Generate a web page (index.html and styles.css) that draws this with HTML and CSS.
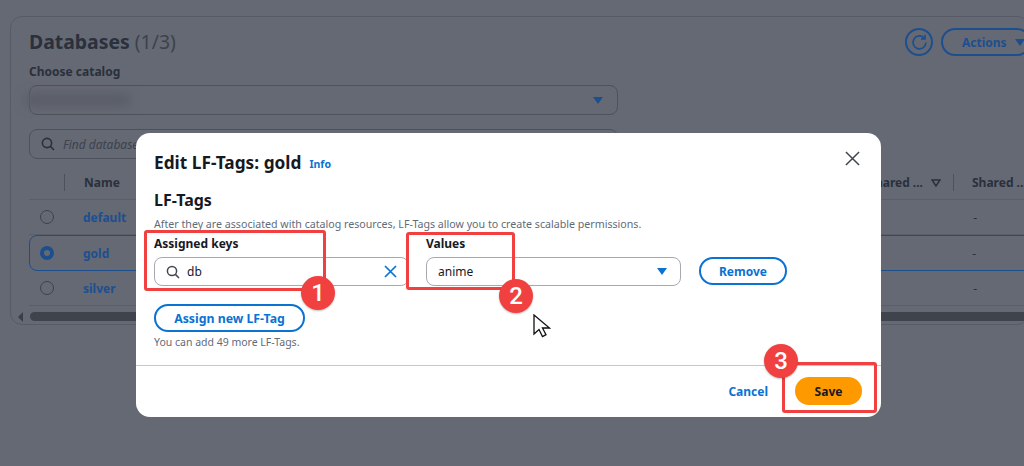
FILE: index.html
```html
<!DOCTYPE html>
<html lang="en">
<head>
    <meta charset="UTF-8">
    <title>Edit LF-Tags</title>
    <link rel="stylesheet" href="styles.css">
</head>
<body>
    <div class="card">
        <div class="card-top">
            <h1>Databases <span class="count">(1/3)</span></h1>
            <div class="top-actions">
                <span class="refresh">
                    <svg width="17" height="17" viewBox="0 0 20 20" fill="none" stroke="#1d4f8f" stroke-width="2"><path d="M15.500 4.600A7.600 7.600 0 1 0 17.600 10"/><path d="M16.500 1v4.700h-4.700"/></svg>
                </span>
                <span class="actions-btn">Actions <i class="caret caret-dim"></i></span>
            </div>
        </div>
        <div class="catalog-label">Choose catalog</div>
        <div class="select-box"><span class="blurred"></span><i class="caret caret-dim"></i></div>
        <div class="find-box">
            <svg width="14" height="14" viewBox="0 0 14 14" fill="none" stroke="#2a303c" stroke-width="1.6"><circle cx="6" cy="6" r="4.6"/><path d="M9.4 9.4L13 13"/></svg>
            <span>Find databases</span>
        </div>
        <div class="table-head">
            <span class="head-sep"></span>
            <span class="head-name">Name</span>
            <span class="head-shared">Shared ...</span>
            <svg class="sort" width="10" height="8" viewBox="0 0 10 8" fill="none" stroke="#2a303c" stroke-width="1.5"><path d="M1 1h8L5 7z"/></svg>
            <span class="head-sep"></span>
            <span class="head-last">Shared ...</span>
        </div>
        <div class="row"><i class="radio"></i><a>default</a><span class="dash">-</span></div>
        <div class="row row-selected"><i class="radio radio-on"></i><a>gold</a><span class="dash">-</span></div>
        <div class="row"><i class="radio"></i><a>silver</a><span class="dash">-</span></div>
        <div class="scroll">
            <i class="scroll-arrow"></i>
            <span class="scroll-thumb"></span>
        </div>
    </div>

    <div class="modal">
        <div class="modal-body">
            <div class="modal-title">
                <h2>Edit LF-Tags: gold</h2>
                <a class="info">Info</a>
                <svg class="close" width="15" height="15" viewBox="0 0 16 16" fill="none" stroke="#3f4650" stroke-width="1.6"><path d="M1 1l14 14M15 1L1 15"/></svg>
            </div>
            <h3>LF-Tags</h3>
            <p class="desc">After they are associated with catalog resources, LF-Tags allow you to create scalable permissions.</p>
            <div class="tag-row">
                <div class="field">
                    <label>Assigned keys</label>
                    <div class="input">
                        <svg width="14" height="14" viewBox="0 0 14 14" fill="none" stroke="#414750" stroke-width="1.5"><circle cx="6" cy="6" r="4.6"/><path d="M9.4 9.4L13 13"/></svg>
                        <span>db</span>
                        <svg class="clear" width="13" height="13" viewBox="0 0 13 13" fill="none" stroke="#0972d3" stroke-width="1.7"><path d="M1 1l11 11M12 1L1 12"/></svg>
                    </div>
                </div>
                <div class="field">
                    <label>Values</label>
                    <div class="input">
                        <span>anime</span>
                        <i class="caret"></i>
                    </div>
                </div>
                <button class="btn btn-remove">Remove</button>
            </div>
            <button class="btn btn-assign">Assign new LF-Tag</button>
            <p class="hint">You can add 49 more LF-Tags.</p>
        </div>
        <div class="modal-foot">
            <a class="cancel">Cancel</a>
            <button class="save">Save</button>
        </div>
    </div>

    <!-- red annotations drawn on top of the screenshot -->
    <div class="mark mark-1"></div>
    <div class="mark mark-2"></div>
    <div class="mark mark-3"></div>
    <div class="dot dot-1">1</div>
    <div class="dot dot-2">2</div>
    <div class="dot dot-3">3</div>
    <svg class="pointer" width="18" height="25" viewBox="0 0 18 25" fill="#fff" stroke="#111" stroke-width="1.3"><path d="M1 1v19l5-4.500 3.500 7 3.500-1.800-3.500-6.700h7z"/></svg>
</body>
</html>
```

FILE: styles.css
```css
* {
    box-sizing: border-box;
}
html, body {
    height: 466px;
    overflow: hidden;
}
body {
    margin: 0;
    padding: 16px 0 0 10px;
    background-color: #656973;
    font-family: "Noto Sans", "Open Sans", sans-serif;
    color: #2a303c;
}
.card {
    width: 1019px;
    height: 309px;
    padding: 1px 0 0 18px;
    border: 1px solid #575b65;
    border-radius: 12px;
}
.card-top {
    display: flex;
    justify-content: space-between;
    align-items: center;
    height: 48px;
}
h1 {
    flex: none;
    margin: 0;
    font-size: 19.400px;
    font-weight: 700;
    line-height: 48px;
    color: #2a303c;
}
.count {
    font-weight: 400;
    color: #3c424d;
}
.top-actions {
    display: flex;
    flex: none;
    align-items: center;
    gap: 8px;
    margin-right: -3px;
}
.refresh {
    display: flex;
    align-items: center;
    justify-content: center;
    width: 28px;
    height: 28px;
    border: 2px solid #1d4f8f;
    border-radius: 50%;
}
.actions-btn {
    display: flex;
    align-items: center;
    gap: 8px;
    width: 90px;
    height: 28px;
    padding-left: 19px;
    border: 2px solid #1d4f8f;
    border-radius: 14px;
    font-size: 12px;
    font-weight: 700;
    color: #1d4f8f;
}
.catalog-label {
    margin-top: -2px;
    font-size: 12px;
    font-weight: 700;
    line-height: 16px;
}
.select-box {
    display: flex;
    align-items: center;
    justify-content: space-between;
    width: 589px;
    height: 30px;
    margin-top: 5px;
    padding: 0 14px 0 0;
    border: 1px solid #4d515b;
    border-radius: 8px;
}
.blurred {
    width: 105px;
    height: 14px;
    margin-left: -5px;
    background-color: #5a5e68;
    border-radius: 4px;
    filter: blur(5px);
}
.caret {
    display: inline-block;
    width: 0;
    height: 0;
    border-left: 5px solid transparent;
    border-right: 5px solid transparent;
    border-top: 7px solid #0972d3;
}
.caret-dim {
    border-top-color: #1d4f8f;
}
.find-box {
    display: flex;
    align-items: center;
    gap: 8px;
    width: 589px;
    height: 30px;
    margin-top: 14px;
    padding-left: 11px;
    border: 1px solid #4d515b;
    border-radius: 8px;
    font-size: 12px;
    font-style: italic;
    color: #3c424d;
}
.table-head {
    display: flex;
    align-items: center;
    width: 1000px;
    height: 41px;
    padding: 7px 0 0 35px;
    border-bottom: 1px solid #5a5e68;
    font-size: 12px;
    font-weight: 700;
}
.head-sep {
    width: 1px;
    height: 17px;
    background-color: #4d515b;
}
.head-name {
    margin-left: 19px;
}
.head-shared {
    margin-left: auto;
}
.sort {
    margin-left: 8px;
    margin-right: 12px;
}
.head-last {
    flex: none;
    margin-left: 18px;
    width: 57px;
}
.row {
    display: flex;
    align-items: center;
    width: 1000px;
    height: 35px;
    padding-left: 11px;
    border-bottom: 1px solid #5a5e68;
    font-size: 12px;
}
.row a {
    margin-left: 29px;
    font-weight: 700;
    color: #1d4f8f;
}
.dash {
    margin-left: auto;
    margin-right: 52px;
    color: #2a303c;
}
.row-selected {
    height: 36px;
    padding-left: 10px;
    border: 1px solid #1d4f8f;
    border-radius: 8px 0 0 8px;
}
.radio {
    width: 14px;
    height: 14px;
    border: 1px solid #3c424d;
    border-radius: 50%;
}
.radio-on {
    border: 4px solid #1d4f8f;
    background-color: #656973;
}
.scroll {
    display: flex;
    align-items: center;
    margin-left: -17px;
    margin-top: 6px;
    height: 9px;
    width: 1017px;
}
.scroll-arrow {
    width: 0;
    height: 0;
    border-top: 5px solid transparent;
    border-bottom: 5px solid transparent;
    border-right: 5px solid #3a3e47;
    margin-left: 6px;
}
.scroll-thumb {
    flex: 1;
    height: 9px;
    margin-left: 7px;
    background-color: #3f434c;
    border-radius: 5px;
}

.modal {
    position: absolute;
    left: 136px;
    top: 133px;
    width: 745px;
    height: 284px;
    background-color: #fff;
    border-radius: 14px;
    color: #16191f;
}
.modal-body {
    height: 233px;
    padding: 16px 18px 0;
    border-bottom: 1px solid #c6c6cd;
}
.modal-title {
    display: flex;
    align-items: center;
    height: 26px;
}
h2 {
    margin: 0;
    font-size: 17.300px;
    font-weight: 700;
}
.info {
    margin-left: 8px;
    margin-top: 4px;
    font-size: 10.500px;
    font-weight: 700;
    color: #0972d3;
}
.close {
    margin-left: auto;
    margin-right: 3px;
    margin-top: -8px;
}
h3 {
    margin: 15px 0 0;
    font-size: 16px;
    font-weight: 700;
    line-height: 20px;
}
.desc {
    margin: 6px 0 0;
    font-size: 10.650px;
    line-height: 16px;
    color: #5f6b7a;
}
.tag-row {
    display: flex;
    align-items: flex-end;
    gap: 17px;
    margin-top: 4px;
}
.field {
    width: 255px;
}
label {
    display: block;
    font-size: 12px;
    font-weight: 700;
    line-height: 16px;
    margin-bottom: 5px;
}
.input {
    display: flex;
    align-items: center;
    height: 29px;
    padding: 0 13px 0 11px;
    border: 1px solid #a8a8b0;
    border-radius: 8px;
    font-size: 12px;
}
.input svg:first-child {
    margin-right: 7px;
}
.input .clear {
    margin-left: auto;
    margin-right: -2px;
}
.input .caret {
    margin-left: auto;
}
.btn {
    height: 28px;
    padding: 0;
    background-color: #fff;
    border: 2px solid #0972d3;
    border-radius: 14px;
    font-family: inherit;
    font-size: 12px;
    font-weight: 700;
    color: #0972d3;
}
.btn-remove {
    width: 88px;
    margin-left: 1px;
    margin-bottom: 1px;
}
.btn-assign {
    display: block;
    width: 151px;
    margin-top: 18px;
    font-size: 12.300px;
}
.hint {
    margin: 2px 0 0;
    font-size: 10.500px;
    line-height: 16px;
    color: #5f6b7a;
}
.modal-foot {
    display: flex;
    justify-content: flex-end;
    align-items: center;
    gap: 27px;
    height: 50px;
    padding-right: 19px;
}
.cancel {
    font-size: 12px;
    font-weight: 700;
    color: #0972d3;
}
.save {
    width: 67px;
    height: 28px;
    padding: 0;
    border: none;
    border-radius: 14px;
    background-color: #ff9900;
    font-family: inherit;
    font-size: 12px;
    font-weight: 700;
    color: #16191f;
}

.mark {
    position: absolute;
    border: 3px solid #f04040;
    border-radius: 3px;
}
.mark-1 {
    left: 144px;
    top: 230px;
    width: 182px;
    height: 61px;
}
.mark-2 {
    left: 406px;
    top: 232px;
    width: 109px;
    height: 58px;
}
.mark-3 {
    left: 782px;
    top: 362px;
    width: 95px;
    height: 51px;
}
.dot {
    position: absolute;
    width: 34px;
    height: 34px;
    display: flex;
    align-items: center;
    justify-content: center;
    background-color: #f04040;
    border-radius: 50%;
    font-family: Roboto, sans-serif;
    font-size: 24px;
    font-weight: 500;
    color: #fff;
    box-shadow: 0 1px 2px rgba(0,0,0,0.25);
}
.dot-1 {
    left: 301px;
    top: 276px;
}
.dot-2 {
    left: 499px;
    top: 279px;
}
.dot-3 {
    left: 764px;
    top: 344px;
}
.pointer {
    position: absolute;
    left: 533px;
    top: 314px;
}
```
